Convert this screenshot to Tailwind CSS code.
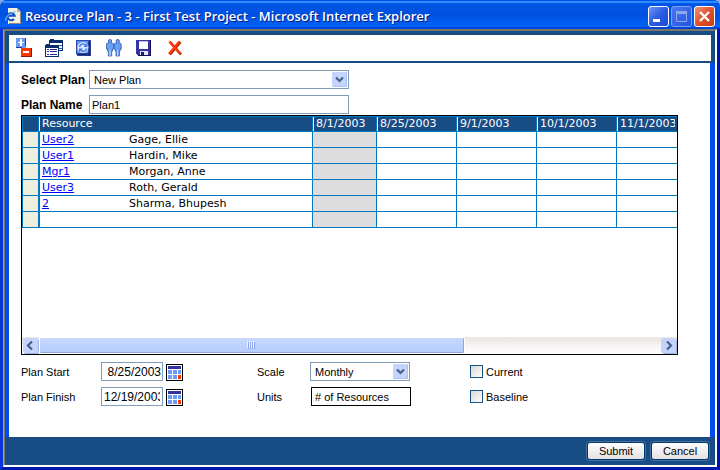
<!DOCTYPE html>
<html lang="en">
<head>
<meta charset="utf-8">
<title>Resource Plan - 3 - First Test Project</title>
<script src="https://cdn.jsdelivr.net/npm/@tailwindcss/browser@4"></script>
</head>
<body class="bg-[#8ea6dc] font-['Liberation_Sans',Arial,sans-serif] text-[11px] leading-[14px] text-black">
<div class="flex min-h-screen flex-col overflow-hidden rounded-t-[7px] bg-[#0048f0]">
  <header class="flex h-[29px] items-center bg-linear-to-b from-[#0058e8] via-[#0050e0] to-[#0066ff] pt-[3px] pr-[5px] pl-[5px] shadow-[inset_0_1px_0_#0050e8,inset_0_3px_0_#2f8cff,inset_0_-2px_0_#0044d8]">
    <svg class="size-4" viewBox="0 0 16 16" aria-hidden="true">
      <path d="M3 0h9l4 4v12H3z" fill="#f4f1e4"/>
      <path d="M12 0v4h4z" fill="#b8b4a0"/>
      <path d="M15.500 4v11.500H4" fill="none" stroke="#8c8a78"/>
      <path d="M9 11a3.600 3.600 0 1 1 .7-3.200H3.500" fill="none" stroke="#0a50c0" stroke-width="2"/>
      <path d="M1 13C-.5 10 5 4 10.500 3.500" fill="none" stroke="#6ab4ff" stroke-width="1.200"/>
    </svg>
    <h1 class="ml-1 flex-1 whitespace-nowrap font-['Open_Sans','Trebuchet_MS',sans-serif] text-[13px] font-semibold leading-[16px] text-white [text-shadow:1px_1px_0_#0a1a80]">Resource Plan - 3 - First Test Project - Microsoft Internet Explorer</h1>
    <div class="flex gap-[2px]">
      <button type="button" aria-label="Minimize" class="size-[21px] rounded-[3px] border border-white bg-linear-to-br from-[#6f93f4] via-[#2c5ae4] to-[#1a4ad8]">
        <svg viewBox="0 0 19 19" aria-hidden="true"><path d="M4 12h7v3H4z" fill="#fff"/></svg>
      </button>
      <button type="button" aria-label="Maximize" disabled class="size-[21px] rounded-[3px] border border-[#7f9ff2] bg-linear-to-br from-[#4c78ee] to-[#1f52e0]">
        <svg viewBox="0 0 19 19" aria-hidden="true"><path d="M4.500 5.500h10v9h-10z" fill="none" stroke="#8fa6f0"/><path d="M4 4h11v3H4z" fill="#8fa6f0"/></svg>
      </button>
      <button type="button" aria-label="Close" class="size-[21px] rounded-[3px] border border-white bg-linear-to-br from-[#f09070] via-[#e0502a] to-[#cc3c14]">
        <svg viewBox="0 0 19 19" aria-hidden="true"><path d="M5 5l9 9M14 5l-9 9" stroke="#fff" stroke-width="2.400"/></svg>
      </button>
    </div>
  </header>

  <div class="flex flex-1 flex-col border-x-[3px] border-b-[3px] border-r-[#0014a8] border-b-[#0018b0] border-l-[#0838dc]">
    <div class="flex flex-1 flex-col border border-t-2 border-r-2 border-b-2 border-t-[#7c7868] border-r-white border-b-white border-l-[#8ba4e0]">
      <div class="flex flex-1 flex-col border-l border-[#7c7868]">

        <nav class="flex h-[32px] items-center border-x-4 border-t-4 border-b-2 border-[#184c84] bg-white pl-[6px]" aria-label="Tools">
          <div class="flex gap-[10px] [&_button]:flex [&_button]:h-5 [&_button]:w-5 [&_button]:items-center [&_svg]:max-w-none [&_svg]:shrink-0">
            <button type="button" aria-label="Expand or collapse">
              <svg viewBox="0 0 17 20" width="17" height="20" aria-hidden="true" shape-rendering="crispEdges">
                <path d="M1 0h10v10H1z" fill="#6a9cf4"/><path d="M1 9h6v1H1zM10 0h1v8h-1z" fill="#2038a0"/>
                <path d="M5 1h2v7H5zM3 4h6v1H3z" fill="#fff"/>
                <path d="M6 10h11v9H6z" fill="#ff3800"/><path d="M6 18h11v1H6zM16 10h1v9h-1z" fill="#901800"/>
                <path d="M8 13h6v2H8z" fill="#fff"/>
              </svg>
            </button>
            <button type="button" aria-label="Plans">
              <svg viewBox="0 0 18 18" width="18" height="18" aria-hidden="true" shape-rendering="crispEdges">
                <path d="M4 1h1V0h4v1h9v11H4z" fill="#083068"/><path d="M5 4h12v7H5z" fill="#fff"/><path d="M14 6h3v1h-3zM14 9h3v1h-3z" fill="#4048b0"/>
                <path d="M0 6h1V5h4v1h9v12H0z" fill="#083068"/><path d="M1 9h12v8H1z" fill="#fff"/>
                <path d="M2 10h2v1H2zM5 10h7v1H5zM2 12h2v1H2zM5 12h7v1H5zM2 15h2v1H2zM5 15h7v1H5z" fill="#2828a0"/>
              </svg>
            </button>
            <button type="button" aria-label="Refresh" class="pl-px">
              <svg viewBox="0 0 16 16" width="16" height="16" aria-hidden="true">
                <path d="M0 0h15v16H2l-2-2z" fill="#5a94f4"/><path d="M13.500 0v16M1 14.500h13" stroke="#182878" stroke-width="2.500"/><path d="M.5 0v14M0 .5h15" stroke="#3048b0"/>
                <circle cx="7" cy="7.500" r="5.500" fill="#d8e8ff"/>
                <path d="M3.500 7A3.600 3.600 0 0 1 10 5.500M10.800 8.500A3.600 3.600 0 0 1 4.500 10" fill="none" stroke="#4c80e4" stroke-width="1.600"/>
                <path d="M11.500 3v4h-4zM3 12V8.500h4z" fill="#3c74e8"/>
              </svg>
            </button>
            <button type="button" aria-label="Resources" class="pl-px">
              <svg viewBox="0 0 16 18" width="16" height="18" aria-hidden="true">
                <g fill="#68a0f8" stroke="#2c58a8" stroke-width=".8">
                  <path id="person" d="M2.500 1l1-.6h1l1 .6v2L5 4h1.500l1 1v5h-1v2h-.8v5H2.300v-5h-.8v-2h-1V5l1-1H3l-.5-1z"/>
                  <use href="#person" x="7.700"/>
                </g>
                <path d="M4 11v6M11.700 11v6" stroke="#e8f2ff" stroke-width=".8"/>
              </svg>
            </button>
            <button type="button" aria-label="Save" class="pl-px">
              <svg viewBox="0 0 16 16" width="16" height="16" aria-hidden="true" shape-rendering="crispEdges">
                <path d="M0 0h15v16H2l-2-2z" fill="#3434a4"/><path d="M14 0h1v16H2v-1h12z" fill="#101050"/>
                <path d="M3 1h9v8H3z" fill="#fff"/><path d="M3 1h9v1H3z" fill="#b8c8f0"/>
                <path d="M4 11h8v4H4z" fill="#e0e4f4"/><path d="M5 12h3v3H5z" fill="#182060"/>
              </svg>
            </button>
            <button type="button" aria-label="Delete" class="pl-[2px]">
              <svg viewBox="0 0 16 16" width="16" height="16" aria-hidden="true">
                <path d="M3 2l11 12.500M13.500 2L3 14.500" stroke="#a02008" stroke-width="2.600"/>
                <path d="M2.500 1.500l10.500 12M12.500 1.500L2 14" stroke="#ff3808" stroke-width="2.600"/>
              </svg>
            </button>
          </div>
        </nav>

        <form class="flex flex-1 flex-col" onsubmit="return false">
          <main class="flex flex-1 flex-col border-r-[5px] border-l-4 border-[#004cf0] bg-white pt-[7px] pr-8 pl-3">
            <div class="grid grid-cols-[68px_260px] gap-y-[6px]">
              <label for="plan" class="self-center whitespace-nowrap text-[12px] font-bold">Select Plan</label>
              <div class="relative">
                <select id="plan" class="block h-[19px] w-full appearance-none border border-[#7f9db9] bg-white pl-1 leading-[16px] outline-none"><option>New Plan</option></select>
                <svg class="pointer-events-none absolute top-[2px] right-[2px]" width="15" height="15" viewBox="0 0 15 15" aria-hidden="true"><rect width="15" height="15" rx="1" fill="#c4d4fc"/><path d="M1 14.500h13.500V1" fill="none" stroke="#aabff2"/><path d="M4 5.500l3.500 3.500L11 5.500" fill="none" stroke="#44608c" stroke-width="2.200"/></svg>
              </div>
              <label for="name" class="self-center whitespace-nowrap text-[12px] font-bold">Plan Name</label>
              <input id="name" value="Plan1" class="block h-[19px] w-full border border-[#7f9db9] bg-white px-[2px] outline-none">
            </div>

            <section class="mt-px flex h-[240px] flex-col overflow-hidden border border-black" aria-label="Plan grid">
              <div class="flex-1 overflow-hidden">
                <table class="w-[675px] table-fixed border-separate border-spacing-0 border-t border-[#0079c1] font-['DejaVu_Sans',Verdana,sans-serif] text-[11px] leading-[14px] [&_td]:h-4 [&_td]:border-r [&_td]:border-b [&_td]:border-[#0079c1] [&_td]:p-0 [&_td]:whitespace-nowrap [&_a]:text-[#0000ff] [&_a]:underline">
                  <colgroup><col class="w-[17px]"><col class="w-[88px]"><col class="w-[186px]"><col class="w-[64px]"><col class="w-[80px]"><col class="w-[80px]"><col class="w-[80px]"><col class="w-[80px]"></colgroup>
                  <thead class="bg-[#184c84] text-left text-white [&_th]:h-[15px] [&_th]:border-r [&_th]:border-b [&_th]:border-[#0079c1] [&_th]:p-0 [&_th]:font-normal [&_th]:whitespace-nowrap [&_span]:block [&_span]:border-l [&_span]:border-white [&_span]:pl-[2px]">
                    <tr><th class="border-l"></th><th colspan="2"><span>Resource</span></th><th><span>8/1/2003</span></th><th><span>8/25/2003</span></th><th><span>9/1/2003</span></th><th><span>10/1/2003</span></th><th><span class="w-[58px] overflow-hidden">11/1/2003</span></th></tr>
                  </thead>
                  <tbody class="[&_td:first-child]:border-l [&_td:first-child]:bg-[#eeeedd] [&_td:nth-child(2)]:border-r-0 [&_td:nth-child(2)]:border-l [&_td:nth-child(2)]:pl-[2px] [&_td:nth-child(3)]:pl-[2px] [&_td:nth-child(4)]:bg-[#dcdcdc]">
                    <tr><td></td><td><a href="#">User2</a></td><td>Gage, Ellie</td><td></td><td></td><td></td><td></td><td></td></tr>
                    <tr><td></td><td><a href="#">User1</a></td><td>Hardin, Mike</td><td></td><td></td><td></td><td></td><td></td></tr>
                    <tr><td></td><td><a href="#">Mgr1</a></td><td>Morgan, Anne</td><td></td><td></td><td></td><td></td><td></td></tr>
                    <tr><td></td><td><a href="#">User3</a></td><td>Roth, Gerald</td><td></td><td></td><td></td><td></td><td></td></tr>
                    <tr><td></td><td><a href="#">2</a></td><td>Sharma, Bhupesh</td><td></td><td></td><td></td><td></td><td></td></tr>
                    <tr><td></td><td></td><td></td><td></td><td></td><td></td><td></td><td></td></tr>
                  </tbody>
                </table>
              </div>
              <div class="flex h-[17px] bg-linear-to-b from-[#ece6e4] to-white">
                <button type="button" aria-label="Scroll left" class="m-px size-[15px] rounded-[2px] bg-[#c4d4fc] shadow-[1px_1px_0_#a0b4e4]"><svg viewBox="0 0 15 15" aria-hidden="true"><path d="M9 3.500L5 7.500l4 4" fill="none" stroke="#44608c" stroke-width="2.200"/></svg></button>
                <div class="flex w-[65%] items-center justify-center rounded-[2px] border border-white bg-linear-to-b from-[#c8d8ff] to-[#b4ccfc] shadow-[inset_-1px_-1px_0_#8fa8dc]">
                  <div class="flex gap-px"><i class="h-[7px] w-px bg-[#8ca8e8] shadow-[-1px_-1px_0_#eef4ff]"></i><i class="h-[7px] w-px bg-[#8ca8e8] shadow-[-1px_-1px_0_#eef4ff]"></i><i class="h-[7px] w-px bg-[#8ca8e8] shadow-[-1px_-1px_0_#eef4ff]"></i><i class="h-[7px] w-px bg-[#8ca8e8] shadow-[-1px_-1px_0_#eef4ff]"></i></div>
                </div>
                <button type="button" aria-label="Scroll right" class="m-px ml-auto size-[15px] rounded-[2px] bg-[#c4d4fc] shadow-[1px_1px_0_#a0b4e4]"><svg viewBox="0 0 15 15" aria-hidden="true"><path d="M6 3.500l4 4-4 4" fill="none" stroke="#44608c" stroke-width="2.200"/></svg></button>
              </div>
            </section>

            <div class="mt-[7px] grid grid-cols-[80px_156px_53px_160px_1fr] items-center gap-y-[6px]">
              <label for="start">Plan Start</label>
              <div class="flex items-end gap-[3px]">
                <input id="start" value="8/25/2003" class="h-[19px] w-[62px] border border-[#7f9db9] bg-white px-px text-right text-[12px] outline-none">
                <button type="button" aria-label="Pick start date" class="size-[17px]"><svg viewBox="0 0 17 17" aria-hidden="true" shape-rendering="crispEdges"><path d="M0 0h17v17H0z"/><path d="M1 1h15v15H1z" fill="#fff"/><path d="M2 2h13v3H2z" fill="#3434a0"/><path d="M2 6h4v4H2zM7 6h4v4H7zM12 6h3v4h-3zM2 11h4v4H2zM7 11h4v4H7z" fill="#689cf8"/><path d="M12 11h3v4h-3z" fill="#ff3800"/></svg></button>
              </div>
              <label for="scale">Scale</label>
              <div class="relative w-[100px]">
                <select id="scale" class="block h-[19px] w-full appearance-none border border-[#7f9db9] bg-white pl-1 leading-[16px] outline-none"><option>Monthly</option></select>
                <svg class="pointer-events-none absolute top-[2px] right-[2px]" width="15" height="15" viewBox="0 0 15 15" aria-hidden="true"><rect width="15" height="15" rx="1" fill="#c4d4fc"/><path d="M1 14.500h13.500V1" fill="none" stroke="#aabff2"/><path d="M4 5.500l3.500 3.500L11 5.500" fill="none" stroke="#44608c" stroke-width="2.200"/></svg>
              </div>
              <div class="flex items-center gap-[3px]">
                <input id="current" type="checkbox" class="size-[13px] appearance-none border border-[#1c5180] bg-linear-to-br from-[#d8d8d4] to-white checked:bg-[#1c5180]">
                <label for="current">Current</label>
              </div>

              <label for="finish">Plan Finish</label>
              <div class="flex items-end gap-[3px]">
                <input id="finish" value="12/19/2003" class="h-[19px] w-[62px] border border-[#7f9db9] bg-white px-[2px] text-[12px] outline-none">
                <button type="button" aria-label="Pick finish date" class="size-[17px]"><svg viewBox="0 0 17 17" aria-hidden="true" shape-rendering="crispEdges"><path d="M0 0h17v17H0z"/><path d="M1 1h15v15H1z" fill="#fff"/><path d="M2 2h13v3H2z" fill="#3434a0"/><path d="M2 6h4v4H2zM7 6h4v4H7zM12 6h3v4h-3zM2 11h4v4H2zM7 11h4v4H7z" fill="#689cf8"/><path d="M12 11h3v4h-3z" fill="#ff3800"/></svg></button>
              </div>
              <label for="units">Units</label>
              <input id="units" value="# of Resources" readonly class="ml-px h-[19px] w-[100px] border border-black bg-white px-[3px] outline-none">
              <div class="flex items-center gap-[3px]">
                <input id="baseline" type="checkbox" class="size-[13px] appearance-none border border-[#1c5180] bg-linear-to-br from-[#d8d8d4] to-white checked:bg-[#1c5180]">
                <label for="baseline">Baseline</label>
              </div>
            </div>
          </main>
          <footer class="flex h-[28px] items-center justify-end gap-[6px] bg-[#184c84] pr-[6px]">
            <button type="submit" class="h-[18px] w-[58px] rounded-[3px] border border-[#003c74] bg-linear-to-b from-white to-[#e4e0e0] leading-[14px] shadow-[0_0_0_1px_#4a6f9c]">Submit</button>
            <button type="button" class="h-[18px] w-[58px] rounded-[3px] border border-[#003c74] bg-linear-to-b from-white to-[#e4e0e0] leading-[14px] shadow-[0_0_0_1px_#4a6f9c]">Cancel</button>
          </footer>
        </form>
      </div>
    </div>
  </div>
</div>
</body>
</html>
